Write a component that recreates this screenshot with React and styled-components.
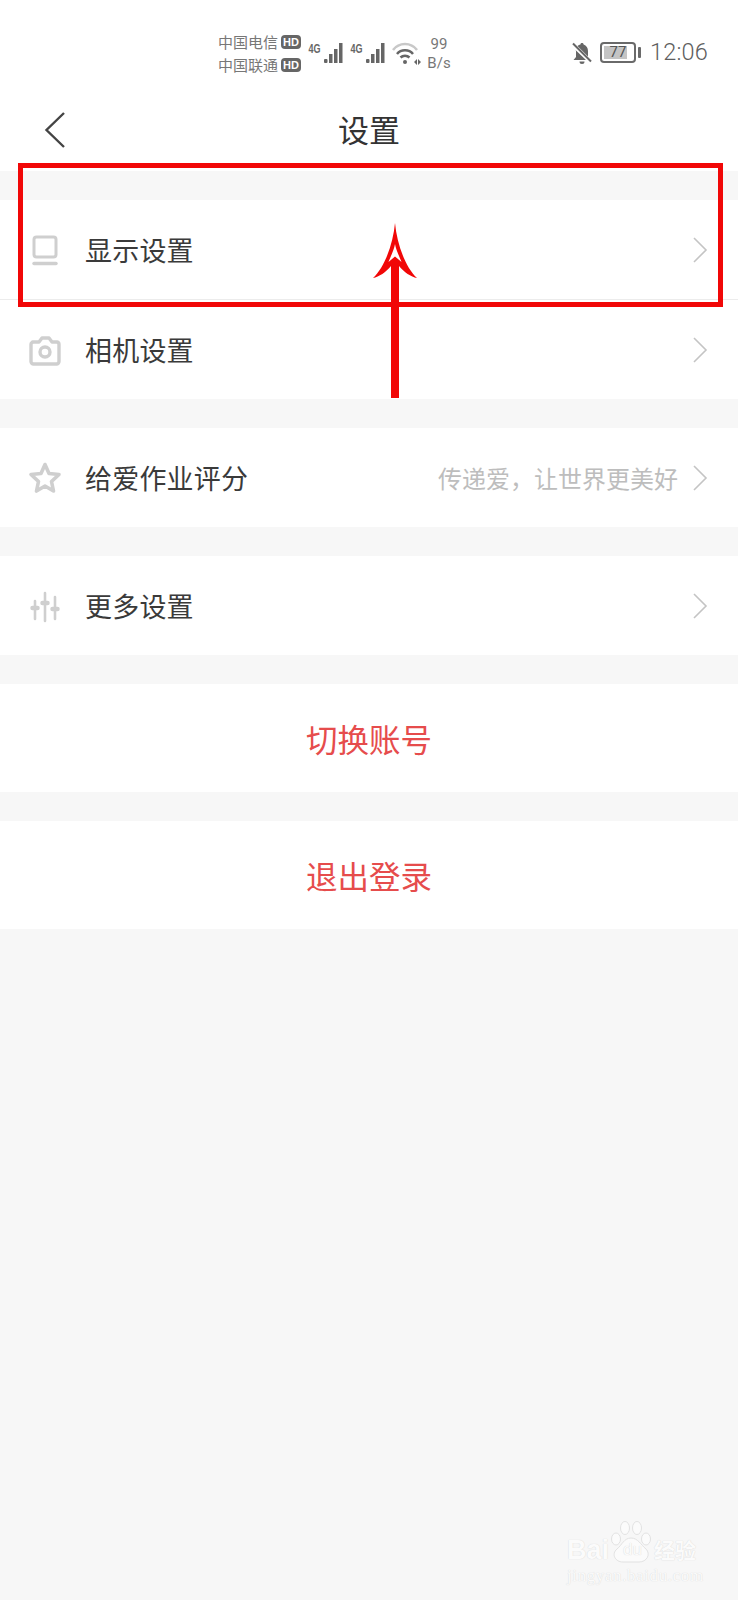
import React from "react";
import styled, { createGlobalStyle } from "styled-components";

const GlobalStyle = createGlobalStyle`
  html, body {
    margin: 0;
    padding: 0;
    background: #f7f7f7;
    font-family: "Noto Sans CJK SC", "Noto Sans", sans-serif;
  }
`;

const Page = styled.div`
  position: relative;
  width: 738px;
  height: 1600px;
  overflow: hidden;
  background: #f7f7f7;
`;

const TopArea = styled.div`
  background: #fff;
  height: 171px;
`;

const StatusBar = styled.div`
  display: flex;
  align-items: flex-start;
  height: 90px;
  padding: 32px 30px 0 218px;
  box-sizing: border-box;
  color: #666;
`;

const Carriers = styled.div`
  display: flex;
  flex-direction: column;
  gap: 3px;
  width: 90px;
`;

const Carrier = styled.div`
  display: flex;
  align-items: center;
  gap: 3px;
  font-size: 15px;
  line-height: 20px;
  color: #777;
`;

const HdBadge = styled.span`
  width: 20px;
  height: 14px;
  border-radius: 4px;
  background: #666;
  color: #fff;
  font: 700 11px/14px "Liberation Sans", sans-serif;
  text-align: center;
`;

const SignalWrap = styled.div`
  display: flex;
  gap: 7px;
  margin-top: 9px;
`;

const WifiIcon = styled.svg`
  margin: 10px 0 0 7px;
`;

const Speed = styled.div`
  width: 34px;
  margin-top: 3px;
  font: 400 15px/19px Roboto, sans-serif;
  text-align: center;
  color: #777;
`;

const Right = styled.div`
  display: flex;
  align-items: center;
  margin-left: auto;
  margin-top: 9px;
`;

const Battery = styled.div`
  position: relative;
  display: flex;
  align-items: center;
  justify-content: center;
  width: 36px;
  height: 21px;
  margin-left: 7px;
  box-sizing: border-box;
  border: 2px solid #6a6a6a;
  border-radius: 4px;
  padding: 2px;
  font: 400 15px/1 Roboto, sans-serif;
  color: #555;
  background: linear-gradient(to right, #c4c4c4 77%, #fff 77%);
  background-clip: content-box;
  &::after {
    content: "";
    position: absolute;
    right: -7px;
    top: 3px;
    width: 3px;
    height: 11px;
    background: #6a6a6a;
    border-radius: 1px;
  }
`;

const Time = styled.div`
  margin-left: 14px;
  font: 300 23.5px/1 Roboto, sans-serif;
  letter-spacing: 0.2px;
  color: #5e5e5e;
`;

const Header = styled.div`
  position: relative;
  display: flex;
  align-items: center;
  justify-content: center;
  height: 81px;
  padding-bottom: 3px;
  box-sizing: border-box;
`;

const BackButton = styled.svg`
  position: absolute;
  left: 44px;
  top: 21px;
`;

const Title = styled.div`
  font-size: 31px;
  line-height: 40px;
  color: #333;
`;

const Group = styled.div`
  margin-top: 29px;
  background: #fff;
`;

const Row = styled.div`
  display: flex;
  align-items: center;
  height: ${(p) => p.$h}px;
  padding: 0 30px 0 28px;
  border-bottom: ${(p) => (p.$line ? "1px solid #ececec" : "none")};
`;

const IconBox = styled.div`
  width: 34px;
  height: 34px;
  margin-right: 23px;
  color: #cfcfcf;
  line-height: 0;
`;

const RowLabel = styled.div`
  padding-top: 1px;
  font-size: 27px;
  line-height: 36px;
  letter-spacing: 0.2px;
  color: #3a3a3a;
`;

const RowHint = styled.div`
  margin-left: auto;
  margin-right: 14px;
  font-size: 24px;
  color: #bdbdbd;
`;

const Arrow = styled.div`
  margin-left: ${(p) => (p.$auto ? "auto" : "0")};
  line-height: 0;
`;

const ActionRow = styled.div`
  display: flex;
  align-items: center;
  justify-content: center;
  height: 108px;
  font-size: 31.5px;
  color: #e64c4c;
`;

const RedBox = styled.div`
  position: absolute;
  left: 18px;
  top: 163px;
  width: 705px;
  height: 144px;
  box-sizing: border-box;
  border: 5px solid #f10707;
`;

const RedArrow = styled.svg`
  position: absolute;
  left: 370px;
  top: 220px;
`;

const Watermark = styled.div`
  position: absolute;
  left: 567px;
  top: 1520px;
  width: 135px;
  color: #fbfbfb;
  text-shadow: 0 0 1px #cfcfcf;
`;

const MarkTop = styled.div`
  display: flex;
  align-items: flex-end;
  height: 42px;
  font: 700 27px/24px "Liberation Sans", sans-serif;
`;

const MarkDu = styled.span`
  position: relative;
  width: 41px;
  margin-left: 3px;
  font: 400 17px/24px "Liberation Sans", sans-serif;
  text-align: center;
`;

const MarkCn = styled.span`
  margin-left: 1px;
  font: 700 21px/26px "Noto Sans CJK SC", sans-serif;
`;

const MarkUrl = styled.div`
  margin-top: 5px;
  font: 400 17px/18px "Liberation Serif", serif;
  letter-spacing: 0.6px;
  white-space: nowrap;
`;

const Paw = styled.svg`
  position: absolute;
  left: 44px;
  top: 0;
`;

const Signal = () => (
  <svg width="35" height="23" viewBox="0 0 35 23" fill="#666">
    <text x="0.5" y="12" fontSize="13" fontWeight="700" fontFamily="Liberation Sans" textLength="12" lengthAdjust="spacingAndGlyphs">
      4G
    </text>
    <rect x="16" y="18" width="3.5" height="4" rx="1" />
    <rect x="21" y="13" width="3.5" height="9" />
    <rect x="26" y="8" width="3.5" height="14" />
    <rect x="31" y="2" width="3.5" height="20" />
  </svg>
);

const Wifi = () => (
  <WifiIcon width="30" height="24" viewBox="0 0 30 24" fill="none">
    <path d="M1 8 C7 0 19 0 25 8" stroke="#c8c8c8" strokeWidth="2.5" />
    <path d="M5 12 C9 7 17 7 21 12" stroke="#666" strokeWidth="2.5" />
    <path d="M8.5 15.5 C11 13 15 13 17.5 15.5" stroke="#666" strokeWidth="2.5" />
    <circle cx="13" cy="20" r="2" fill="#666" />
    <path d="M22 20 l3 -3 v6z M26 17 l3 3 l-3 3z" fill="#666" />
  </WifiIcon>
);

const MutedBell = () => (
  <svg width="22" height="22" viewBox="0 0 22 22">
    <path d="M4.5 8 L15 18 H2.5 L5 15 V9z" fill="#666" />
    <path d="M6.5 4 C7.5 3 8.5 2.6 9.4 2.4 C9.6 1.4 10.2 1 11 1 C11.8 1 12.4 1.4 12.6 2.4 C15.4 3.2 17 5.8 17 9 V14.5z" fill="#666" />
    <path d="M8.5 19.5h5a2.5 2.5 0 0 1-5 0z" fill="#666" />
    <path d="M2 1.5l18 18" stroke="#666" strokeWidth="2" />
  </svg>
);

const Chevron = () => (
  <svg width="16" height="26" viewBox="0 0 16 26" fill="none">
    <path d="M2 1 L14 13 L2 25" stroke="#c4c4c4" strokeWidth="1.6" />
  </svg>
);

const LaptopIcon = () => (
  <svg width="34" height="34" viewBox="0 0 34 34" fill="none" stroke="currentColor">
    <rect x="6" y="4" width="22" height="20" rx="2.5" strokeWidth="3" />
    <path d="M6 30.5 H28" strokeWidth="3.5" strokeLinecap="round" />
  </svg>
);

const CameraIcon = () => (
  <svg width="34" height="34" viewBox="0 0 34 34" fill="none" stroke="currentColor" strokeWidth="3.4">
    <path d="M4.5 9 h6.5 l3 -4 h7 l3 4 h5 a2.5 2.5 0 0 1 2 2.5 v17 a2.5 2.5 0 0 1 -2.5 2.5 h-23 a2.5 2.5 0 0 1 -2.5 -2.5 v-17 a2.5 2.5 0 0 1 2.5 -2.5z" strokeLinejoin="round" />
    <circle cx="17" cy="19" r="5" />
  </svg>
);

const StarIcon = () => (
  <svg width="34" height="34" viewBox="0 0 34 34" fill="none" stroke="currentColor" strokeWidth="3.6" strokeLinejoin="round">
    <path d="M17 3.5 L21 12.5 L31 13.5 L23.5 20.5 L25.5 30 L17 25 L8.5 30 L10.5 20.5 L3 13.5 L13 12.5 Z" />
  </svg>
);

const SlidersIcon = () => (
  <svg width="34" height="34" viewBox="0 0 34 34" fill="none" stroke="currentColor" strokeWidth="2.6" strokeLinecap="round">
    <path d="M7 12 V30 M17 4 V32 M27 8 V30" />
    <path d="M4.5 19 H9.5 M14.5 14 H19.5 M24.5 20 H29.5" strokeWidth="4.5" />
  </svg>
);

const rows = [
  [
    { label: "显示设置", icon: <LaptopIcon />, h: 99, line: true },
    { label: "相机设置", icon: <CameraIcon />, h: 99 },
  ],
  [{ label: "给爱作业评分", icon: <StarIcon />, h: 99, hint: "传递爱，让世界更美好" }],
  [{ label: "更多设置", icon: <SlidersIcon />, h: 99 }],
];

const App = () => {
  return (
    <Page>
      <GlobalStyle />
      <TopArea>
        <StatusBar>
          <Carriers>
            <Carrier>
              中国电信<HdBadge>HD</HdBadge>
            </Carrier>
            <Carrier>
              中国联通<HdBadge>HD</HdBadge>
            </Carrier>
          </Carriers>
          <SignalWrap>
            <Signal />
            <Signal />
          </SignalWrap>
          <Wifi />
          <Speed>
            99
            <br />
            B/s
          </Speed>
          <Right>
            <MutedBell />
            <Battery>77</Battery>
            <Time>12:06</Time>
          </Right>
        </StatusBar>
        <Header>
          <BackButton width="22" height="38" viewBox="0 0 22 38" fill="none">
            <path d="M20 2 L2.5 19 L20 36" stroke="#444" strokeWidth="2.4" />
          </BackButton>
          <Title>设置</Title>
        </Header>
      </TopArea>

      {rows.map((group, i) => (
        <Group key={i}>
          {group.map((row) => (
            <Row key={row.label} $h={row.h} $line={row.line}>
              <IconBox>{row.icon}</IconBox>
              <RowLabel>{row.label}</RowLabel>
              {row.hint && <RowHint>{row.hint}</RowHint>}
              <Arrow $auto={!row.hint}>
                <Chevron />
              </Arrow>
            </Row>
          ))}
        </Group>
      ))}

      <Group>
        <ActionRow>切换账号</ActionRow>
      </Group>
      <Group>
        <ActionRow>退出登录</ActionRow>
      </Group>

      <RedBox />
      <RedArrow width="50" height="180" viewBox="0 0 50 180" fill="#f10707">
        <path d="M25 3 C27 25 36 48 47 58 C41 57 34 52 29 46 V178 H21 V46 C16 52 9 57 3 58 C14 48 23 25 25 3 Z" />
        <path d="M25 24 C24 30 20 38 18.5 42 L25 36.5 L31.5 42 C30 38 26 30 25 24 Z" fill="#fff" />
      </RedArrow>

      <Watermark>
        <Paw width="44" height="44" viewBox="0 0 44 44" fill="#fbfbfb" stroke="#dcdcdc" strokeWidth="0.8">
          <ellipse cx="5" cy="19" rx="4.5" ry="6" />
          <ellipse cx="14" cy="8" rx="4.5" ry="6.5" />
          <ellipse cx="26" cy="8" rx="4.5" ry="6.5" />
          <ellipse cx="35" cy="19" rx="4.5" ry="6" />
          <path d="M20 18 C27 18 30 25 35 29 C40 34 36 42 28 42 H12 C4 42 0 34 6 29 C11 25 13 18 20 18 Z" />
        </Paw>
        <MarkTop>
          Bai
          <MarkDu>du</MarkDu>
          <MarkCn>经验</MarkCn>
        </MarkTop>
        <MarkUrl>jingyan.baidu.com</MarkUrl>
      </Watermark>
    </Page>
  );
};

export default App;
